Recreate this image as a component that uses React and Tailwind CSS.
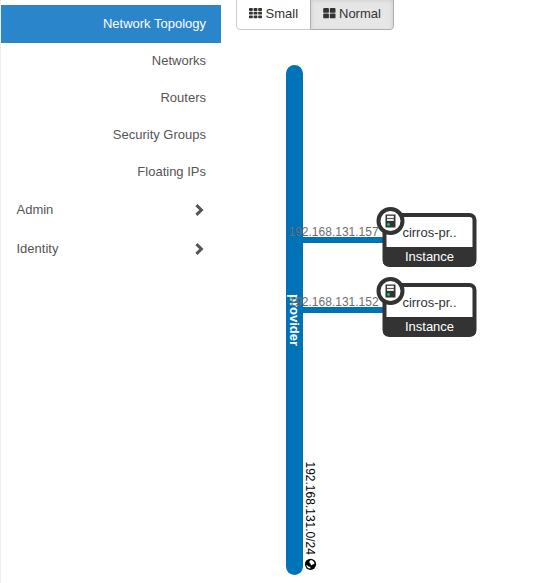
const subItems = ["Networks", "Routers", "Security Groups", "Floating IPs"];
const groups = ["Admin", "Identity"];
const servers = [
  { y: 213, ip: "192.168.131.157" },
  { y: 283, ip: "192.168.131.152" },
];

function Chevron() {
  return (
    <svg className="mr-[2px] h-3 w-[9px]" viewBox="0 0 9 12">
      <path d="M1.4 1.1 L6.4 6 L1.4 10.9" fill="none" stroke="#555" strokeWidth="3" />
    </svg>
  );
}

function SmallGrid() {
  return (
    <svg className="-mt-[2px] mr-[3.6px] h-[11px] w-[13px]" viewBox="0 0 13 11" fill="#333">
      {[0, 3.7, 7.4].map((y) =>
        [0, 4.6, 9.2].map((x) => <rect key={x + "-" + y} x={x} y={y} width="3.8" height="2.9" rx="0.7" />)
      )}
    </svg>
  );
}

function LargeGrid() {
  return (
    <svg className="-mt-[2px] mr-[3px] h-[11px] w-[13px]" viewBox="0 0 13 11" fill="#333">
      {[0, 5.5].map((y) =>
        [0.2, 6.8].map((x) => <rect key={x + "-" + y} x={x} y={y} width="5.7" height="4.8" rx="0.9" />)
      )}
    </svg>
  );
}

function Server({ y, ip }) {
  return (
    <g transform={`translate(0 ${y})`}>
      <rect x="303" y="24" width="81" height="6" fill="#0072b6" />
      <text x="288.5" y="23" fontSize="12" fill="#6e6e6e">{ip}</text>
      <rect x="384.5" y="2" width="90" height="50" rx="5" fill="#fff" stroke="#333" strokeWidth="4" />
      <path d="M383 34 H476 V48 Q476 53 471 53 H388 Q383 53 383 48 Z" fill="#333" />
      <text x="429.5" y="24" fontSize="13" fill="#333" textAnchor="middle">cirros-pr..</text>
      <text x="429.5" y="48" fontSize="13" fill="#fff" textAnchor="middle">Instance</text>
      <circle cx="390.5" cy="8" r="12" fill="#fff" stroke="#333" strokeWidth="4" />
      <rect x="385.5" y="1.5" width="10" height="13" fill="#333" />
      <rect x="387" y="2.8" width="6.8" height="2.1" fill="#fff" />
      <rect x="387" y="5.8" width="6.8" height="2.1" fill="#f0f0f0" />
      <circle cx="388.5" cy="11.5" r="1.4" fill="#00d65b" />
    </g>
  );
}

function Topology() {
  return (
    <svg
      className="block h-[553px] w-[313px]"
      viewBox="236 30 313 553"
      fontFamily="'Liberation Sans', Arial, sans-serif"
    >
      <rect x="286" y="65" width="17" height="510" rx="8.5" fill="#0072b6" />
      <text transform="translate(290 320) rotate(90)" fontSize="13" fontWeight="bold" fill="#fff" textAnchor="middle">
        provider
      </text>
      <text transform="translate(306 461.5) rotate(90)" fontSize="12" fill="#000">192.168.131.0/24</text>
      <g transform="translate(310.5 564.3)">
        <circle r="5.6" fill="#000" />
        <path d="M-1 -3.4 L0.4 -4.2 L2.4 -3.6 L3.9 -1.6 L3.6 0.2 L2.4 -0.2 L1.6 1 L0.4 0.6 L0 -0.8 L-1 -1.4 Z M-4.2 1 L-3 1.2 L-1.8 2.3 L-0.2 2.8 L0 4.2 L-2 3.9 L-3.5 2.8 Z" fill="#fff" />
      </g>
      {servers.map((s) => <Server key={s.ip} {...s} />)}
    </svg>
  );
}

export default function App() {
  return (
    <div className="flex h-[583px] w-[549px] overflow-hidden bg-white font-['Liberation_Sans',Arial,sans-serif] text-[13px] leading-[18px] text-[#555]">
      <nav className="w-[221px] shrink-0 border-l border-[#eee] pt-[5px]">
        <a className="flex h-[38px] items-center justify-end bg-[#2b85cb] pr-[15px] text-white">Network Topology</a>
        <div className="-mt-px">
          {subItems.map((item) => (
            <a key={item} className="flex h-[37px] items-center justify-end pr-[15px]">{item}</a>
          ))}
          {groups.map((item) => (
            <a key={item} className="flex h-[39px] items-center justify-between pr-[15px] pl-[15.5px]">
              {item}
              <Chevron />
            </a>
          ))}
        </div>
      </nav>
      <main className="pl-[15px]">
        <div className="flex h-[30px] text-[#333]">
          <button className="-mt-1 flex h-[34px] w-[75px] items-center rounded-l border border-[#ccc] pt-[2px] pl-3">
            <SmallGrid />
            Small
          </button>
          <button className="-mt-1 -ml-px flex h-[34px] w-[84px] items-center rounded-r border border-[#adadad] bg-[#e6e6e6] pt-[2px] pl-3 shadow-[inset_0_3px_5px_rgba(0,0,0,0.125)]">
            <LargeGrid />
            Normal
          </button>
        </div>
        <Topology />
      </main>
    </div>
  );
}
